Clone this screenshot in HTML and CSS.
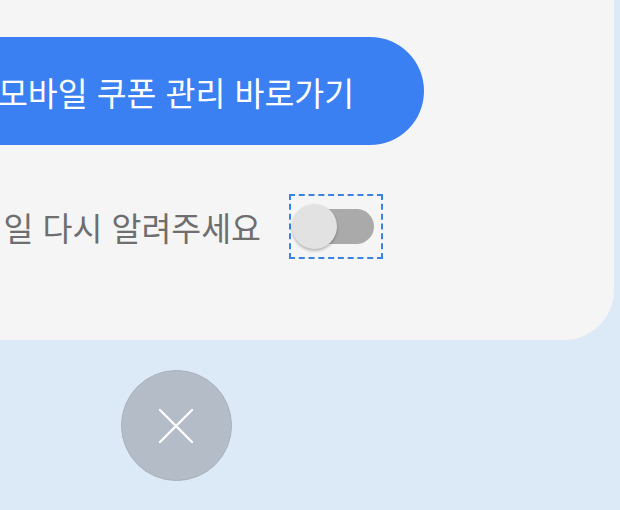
FILE: index.html
```html
<!DOCTYPE html>
<html lang="ko">
<head>
    <meta charset="UTF-8">
    <meta name="viewport" content="width=device-width, initial-scale=1.0">
    <title>쿠폰 알림</title>
    <link rel="stylesheet" href="styles.css">
</head>
<body>

<div class="page">
    <div class="card">
        <button class="cta">모바일 쿠폰 관리 바로가기</button>

        <div class="remind">
            <span class="remind-text">일 다시 알려주세요</span>
            <label class="toggle">
                <span class="track"></span>
                <span class="thumb"></span>
            </label>
        </div>
    </div>

    <button class="close" aria-label="닫기">
        <svg width="34" height="34" viewBox="0 0 34 34">
            <path d="M1 1 L33 33 M33 1 L1 33" stroke="#ffffff" stroke-width="2.4" stroke-linecap="round" fill="none"/>
        </svg>
    </button>
</div>

</body>
</html>
```

FILE: styles.css
```css
body {
    margin: 0;
    background-color: #dce9f6;
    font-family: "Noto Sans CJK KR", "Noto Sans", sans-serif;
    overflow: hidden;
}
.page {
    width: 876px;
    margin-left: -262px;
    display: flex;
    flex-direction: column;
    align-items: center;
}
.card {
    width: 100%;
    box-sizing: border-box;
    background: #f5f5f5;
    border-radius: 0 0 50px 50px;
    padding: 37px 0 83px;
    display: flex;
    flex-direction: column;
    align-items: center;
}
.cta {
    width: 496px;
    height: 108px;
    border: none;
    border-radius: 54px;
    background-color: #3b80f2;
    color: white;
    font-family: inherit;
    font-size: 32.5px;
    padding: 0;
}
.remind {
    align-self: flex-end;
    margin: 51px 233px 0 0;
    display: flex;
    align-items: center;
    gap: 30px;
}
.remind-text {
    font-size: 32.5px;
    color: #6e6e6e;
}
.toggle {
    position: relative;
    width: 90px;
    height: 61px;
    outline: 2px dashed #3a84e0;
}
.track {
    position: absolute;
    left: 6px;
    top: 13px;
    width: 77px;
    height: 35px;
    border-radius: 18px;
    background: #aaaaaa;
}
.thumb {
    position: absolute;
    left: 1px;
    top: 8px;
    width: 45px;
    height: 45px;
    border-radius: 50%;
    background: #e2e2e2;
    box-shadow: 0px 2px 3px rgba(0, 0, 0, 0.25);
}
.close {
    margin-top: 30px;
    width: 111px;
    height: 111px;
    border-radius: 50%;
    border: 1px solid #a8b0bb;
    background: #b4bcc7;
    padding: 0;
    display: flex;
    align-items: center;
    justify-content: center;
}
```
